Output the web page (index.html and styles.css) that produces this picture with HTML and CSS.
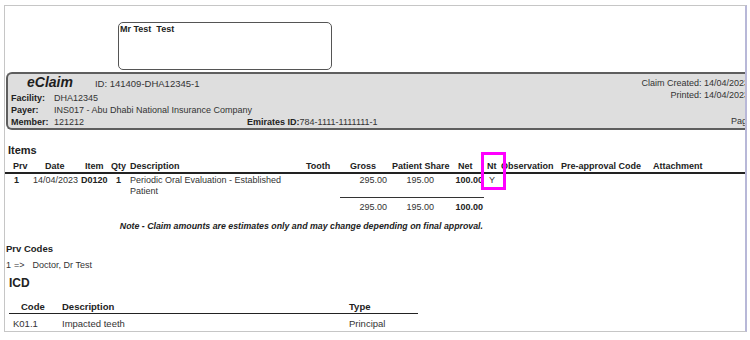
FILE: index.html
```html
<!DOCTYPE html>
<html>
<head>
<meta charset="utf-8">
<title>eClaim</title>
<link rel="stylesheet" href="styles.css">
</head>
<body>
<div class="frame">
  <div class="recipient">Mr Test&nbsp; Test</div>

  <div class="band">
    <div class="band-left">
      <div class="title-row"><span class="title">eClaim</span><span class="claim-id">ID: 141409-DHA12345-1</span></div>
      <div class="info-row first"><span class="lbl">Facility:</span><span class="val">DHA12345</span></div>
      <div class="info-row"><span class="lbl">Payer:</span><span class="val">INS017 - Abu Dhabi National Insurance Company</span></div>
      <div class="info-row"><span class="lbl">Member:</span><span class="val">121212</span><span class="lbl">Emirates ID:</span><span class="val">784-1111-1111111-1</span></div>
    </div>
    <div class="band-right">
      <div>Claim Created: 14/04/2023</div>
      <div>Printed: 14/04/2023</div>
      <div class="page-no">Page 1 of 1</div>
    </div>
  </div>

  <div class="section-title">Items</div>
  <table class="items">
    <colgroup>
      <col class="w-prv"><col class="w-date"><col class="w-item"><col class="w-qty"><col class="w-desc"><col class="w-tooth"><col class="w-gross"><col class="w-share"><col class="w-net"><col class="w-nt"><col class="w-obs"><col class="w-pre"><col class="w-att">
    </colgroup>
    <thead>
      <tr>
        <th class="c-prv">Prv</th>
        <th class="c-date">Date</th>
        <th class="c-item">Item</th>
        <th class="c-qty">Qty</th>
        <th class="c-desc">Description</th>
        <th class="c-tooth">Tooth</th>
        <th class="c-gross">Gross</th>
        <th class="c-share">Patient Share</th>
        <th class="c-net">Net</th>
        <th class="c-nt">Nt</th>
        <th class="c-obs">Observation</th>
        <th class="c-pre">Pre-approval Code</th>
        <th class="c-att">Attachment</th>
      </tr>
    </thead>
    <tbody>
      <tr class="item-row">
        <td class="c-prv b">1</td>
        <td class="c-date">14/04/2023</td>
        <td class="c-item b">D0120</td>
        <td class="c-qty b">1</td>
        <td class="c-desc">Periodic Oral Evaluation - Established Patient</td>
        <td class="c-tooth"></td>
        <td class="c-gross num">295.00</td>
        <td class="c-share num">195.00</td>
        <td class="c-net num b">100.00</td>
        <td class="c-nt">Y</td>
        <td class="c-obs"></td>
        <td class="c-pre"></td>
        <td class="c-att"></td>
      </tr>
      <tr class="totals">
        <td colspan="6"></td>
        <td class="c-gross num sum">295.00</td>
        <td class="c-share num sum">195.00</td>
        <td class="c-net num b sum">100.00</td>
        <td colspan="4"></td>
      </tr>
      <tr class="note-row">
        <td colspan="9" class="note">Note - Claim amounts are estimates only and may change depending on final approval.</td>
        <td colspan="4"></td>
      </tr>
    </tbody>
  </table>

  <div class="prv-title">Prv Codes</div>
  <div class="prv-line"><span class="prv-num">1</span><span class="arrow">=&gt;</span><span>Doctor, Dr Test</span></div>

  <div class="icd-title">ICD</div>
  <table class="icd">
    <colgroup><col class="w-code"><col class="w-idesc"><col class="w-type"></colgroup>
    <thead>
      <tr><th class="i-code">Code</th><th>Description</th><th>Type</th></tr>
    </thead>
    <tbody>
      <tr><td class="i-code">K01.1</td><td>Impacted teeth</td><td>Principal</td></tr>
    </tbody>
  </table>

  <div class="highlight"></div>
</div>
</body>
</html>
```

FILE: styles.css
```css
* { box-sizing: border-box; }

body {
  margin: 0;
  background: #fff;
  font-family: "Liberation Sans", Arial, sans-serif;
  font-size: 9px;
  color: #333;
}

.frame {
  position: relative;
  margin: 5px 0 0 4px;
  width: 743px;
  height: 327px;
  border: 1px solid #c6c6c6;
  border-right: 2px solid #b8b8d8;
  overflow: hidden;
}

.recipient {
  margin: 16px 0 0 113px;
  width: 214px;
  height: 48px;
  border: 1px solid #555;
  border-radius: 5px;
  padding: 1px 0 0 1px;
  font-weight: bold;
  line-height: 10px;
  color: #222;
  white-space: nowrap;
}

/* grey header band */
.band {
  display: flex;
  margin: 2px -12px 0 1px;
  height: 58px;
  border: 2px solid #5e5e5e;
  border-right: 0;
  border-radius: 6px 0 0 6px;
  background: #dedede;
}

.band-left {
  flex: none;
  width: 633px;
  padding-left: 3px;
}

.title-row {
  display: flex;
  align-items: baseline;
  height: 16px;
  line-height: 16px;
  white-space: nowrap;
}

.title {
  margin-left: 16px;
  font-size: 14px;
  font-weight: bold;
  font-style: italic;
  color: #1e1e1e;
}

.claim-id {
  margin-left: 22px;
  font-size: 9.5px;
}

.info-row {
  display: grid;
  grid-template-columns: 43px 193px auto 1fr;
  line-height: 12px;
  white-space: nowrap;
}

.info-row.first { margin-top: 2px; }

.lbl {
  font-weight: bold;
  color: #222;
}

.band-right {
  flex: none;
  width: 108px;
  padding-top: 3px;
  line-height: 12px;
  text-align: right;
  white-space: nowrap;
}

.page-no {
  margin-top: 14px;
  padding-left: 90px;
  text-align: left;
}

/* items */
.section-title {
  margin: 14px 0 0 3px;
  font-size: 11px;
  line-height: 13px;
  font-weight: bold;
  color: #222;
}

.items {
  margin-top: 3px;
  width: 740px;
  table-layout: fixed;
  border-collapse: separate;
  border-spacing: 0;
}

.w-prv { width: 28px; }
.w-date { width: 46px; }
.w-item { width: 27px; }
.w-qty { width: 23px; }
.w-desc { width: 166px; }
.w-tooth { width: 45px; }
.w-gross { width: 48px; }
.w-share { width: 62px; }
.w-net { width: 34px; }
.w-nt { width: 17px; }
.w-obs { width: 56px; }
.w-pre { width: 93px; }
.w-att { width: 95px; }

.items th {
  padding: 0;
  line-height: 12px;
  text-align: left;
  font-weight: bold;
  color: #222;
  white-space: nowrap;
  border-bottom: 2px solid #222;
}

.items td {
  padding: 1px 0 0 0;
  line-height: 11px;
  vertical-align: top;
  text-align: left;
}

.items th.c-prv { padding-left: 8px; }
.items th.c-date { padding-left: 12px; }
.items th.c-item { padding-left: 6px; }
.items th.c-qty { padding-left: 5px; }
.items th.c-desc { padding-left: 1px; }
.items th.c-tooth { padding-left: 11px; }
.items th.c-gross { padding-left: 10px; }
.items th.c-share { padding-left: 4px; }
.items th.c-net { padding-left: 8px; }
.items th.c-nt { padding-left: 3px; }
.items th.c-obs { padding-left: 0; }
.items th.c-pre { padding-left: 4px; }
.items th.c-att { padding-left: 3px; }

.items td.c-prv { padding-left: 9px; }
.items td.c-item { padding-left: 2px; }
.items td.c-qty { padding-left: 10px; }
.items td.c-desc { padding-left: 1px; }
.items td.c-nt { padding-left: 5px; }

.items td.num { text-align: right; }
.items td.c-gross { padding-right: 1px; }
.items td.c-share { padding-right: 16px; }
.items td.c-net { padding-right: 1px; }

.b { font-weight: bold; color: #222; }

.items td.sum {
  border-top: 1px solid #333;
  padding-top: 4px;
  line-height: 10px;
}

.items td.note {
  padding: 8px 1px 0 0;
  font-size: 8.8px;
  line-height: 12px;
  text-align: right;
  font-weight: bold;
  font-style: italic;
  color: #222;
  white-space: nowrap;
}

/* provider codes */
.prv-title {
  margin: 11px 0 0 1px;
  font-size: 9.5px;
  line-height: 12px;
  font-weight: bold;
  color: #222;
}

.prv-line {
  margin: 4px 0 0 1px;
  line-height: 12px;
}

.arrow { margin: 0 8px 0 3px; }

/* ICD */
.icd-title {
  margin: 5px 0 0 4px;
  font-size: 12px;
  line-height: 14px;
  font-weight: bold;
  color: #222;
}

.icd {
  margin: 11px 0 0 4px;
  width: 409px;
  table-layout: fixed;
  border-collapse: separate;
  border-spacing: 0;
  font-size: 9.5px;
}

.w-code { width: 53px; }
.w-idesc { width: 287px; }
.w-type { width: 69px; }

.icd th {
  padding: 0;
  line-height: 12px;
  text-align: left;
  font-weight: bold;
  color: #222;
  border-bottom: 1px solid #222;
}

.icd td {
  padding: 4px 0 0 0;
  line-height: 12px;
  text-align: left;
}

.icd th.i-code { padding-left: 12px; }
.icd td.i-code { padding-left: 4px; }

/* annotation box over the Nt column */
.highlight {
  position: absolute;
  left: 476px;
  top: 146px;
  width: 25px;
  height: 38px;
  border: 3px solid #ff00ff;
}
```
